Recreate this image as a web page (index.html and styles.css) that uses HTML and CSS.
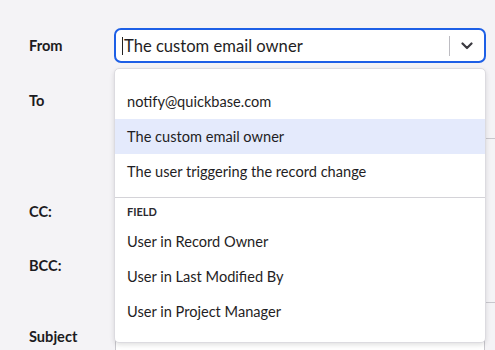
FILE: index.html
```html
<!DOCTYPE html>
<html lang="en">
<head>
    <meta charset="UTF-8">
    <link rel="stylesheet" href="styles.css">
</head>
<body>

<div class="form">
    <div class="row row-from">
        <label class="label">From</label>
        <div class="field">
            <div class="select">
                <div class="select-value"><span class="caret"></span>The custom email owner</div>
                <div class="select-sep"></div>
                <div class="select-arrow">
                    <svg width="12" height="8" viewBox="0 0 12 8"><path d="M1.5 1.5 L6 6 L10.5 1.5" fill="none" stroke="#3b3a40" stroke-width="2.2" stroke-linecap="round" stroke-linejoin="round"/></svg>
                </div>
            </div>

            <div class="menu">
                <div class="menu-group">
                    <div class="menu-item">notify@quickbase.com</div>
                    <div class="menu-item active">The custom email owner</div>
                    <div class="menu-item">The user triggering the record change</div>
                </div>
                <div class="menu-group">
                    <div class="menu-heading">FIELD</div>
                    <div class="menu-item">User in Record Owner</div>
                    <div class="menu-item">User in Last Modified By</div>
                    <div class="menu-item">User in Project Manager</div>
                </div>
            </div>
        </div>
    </div>

    <div class="row row-to">
        <label class="label">To</label>
        <div class="field">
            <div class="box box-to"></div>
        </div>
    </div>

    <div class="row row-hint">
        <span></span>
        <div class="hint">Use a comma.</div>
    </div>

    <div class="row row-cc">
        <label class="label">CC:</label>
        <div class="field"><div class="box box-cc"></div></div>
    </div>

    <div class="row row-bcc">
        <label class="label">BCC:</label>
        <div class="field"><div class="box box-bcc"></div></div>
    </div>

    <div class="row row-subject">
        <label class="label">Subject</label>
        <div class="field"><div class="box box-subject"></div></div>
    </div>
</div>

</body>
</html>
```

FILE: styles.css
```css
body {
    margin: 0;
    font-family: Lato, "Open Sans", sans-serif;
    font-size: 14.6px;
    color: #1f1e24;
    background: #f4f3f6;
    overflow: hidden;
}
.form {
    padding: 28px 9px 0 29px;
}
.row {
    display: grid;
    grid-template-columns: 85px 1fr;
}
.label {
    font-weight: bold;
    font-size: 14.6px;
    line-height: 36px;
    color: #1c1b21;
}
.field {
    position: relative;
}
.row-from .label {
    line-height: 35px;
}
.select {
    height: 35px;
    box-sizing: border-box;
    border: 2px solid #1d5fe6;
    border-radius: 7px;
    background: #fff;
    display: flex;
    align-items: center;
}
.select-value {
    flex: 1;
    padding-left: 6px;
    display: flex;
    align-items: center;
    font-size: 16.6px;
}
.caret {
    width: 1px;
    height: 18px;
    background: #222;
    margin-right: 1px;
}
.select-sep {
    width: 1px;
    height: 20px;
    background: #bdbcc2;
}
.select-arrow {
    width: 34px;
    display: flex;
    justify-content: center;
    padding-top: 1px;
}
.menu {
    position: absolute;
    top: 40px;
    left: 0;
    right: 0;
    z-index: 2;
    background: #fff;
    border: 1px solid #dcdbe0;
    border-radius: 5px;
    box-shadow: 0 2px 5px rgba(0, 0, 0, 0.12);
    padding: 15px 0 13px;
}
.menu-group + .menu-group {
    border-top: 1px solid #d4d3d8;
    margin-top: 8px;
    padding-top: 2px;
}
.menu-item {
    height: 35px;
    line-height: 35px;
    padding-left: 12px;
    white-space: nowrap;
}
.menu-item.active {
    background: #e4eafc;
}
.menu-heading {
    height: 24px;
    line-height: 24px;
    padding-left: 12px;
    font-size: 11px;
    font-weight: bold;
    color: #2a2930;
}
.box {
    box-sizing: border-box;
    border: 1px solid #c8c7cd;
    border-radius: 4px;
    background: #fff;
}
.row-to {
    margin-top: 20px;
    height: 56px;
}
.box-to {
    height: 56px;
    margin-right: -30px;
    border-radius: 0;
    border-width: 0 0 1px 0;
    background: transparent;
}
.row-hint {
    margin-top: 24px;
    height: 16px;
}
.hint {
    text-align: right;
    font-size: 12px;
    line-height: 16px;
    color: #55545a;
    padding-right: 1px;
}
.row-cc {
    margin-top: 15px;
    height: 36px;
}
.box-cc {
    height: 36px;
}
.row-bcc {
    margin-top: 18px;
    height: 55px;
}
.box-bcc {
    height: 55px;
    margin-right: -30px;
    border-radius: 0;
    border-width: 0 0 1px 0;
    background: transparent;
}
.row-subject {
    margin-top: 16px;
    height: 36px;
}
.box-subject {
    height: 40px;
    margin: 6px 1px 0;
}
```
